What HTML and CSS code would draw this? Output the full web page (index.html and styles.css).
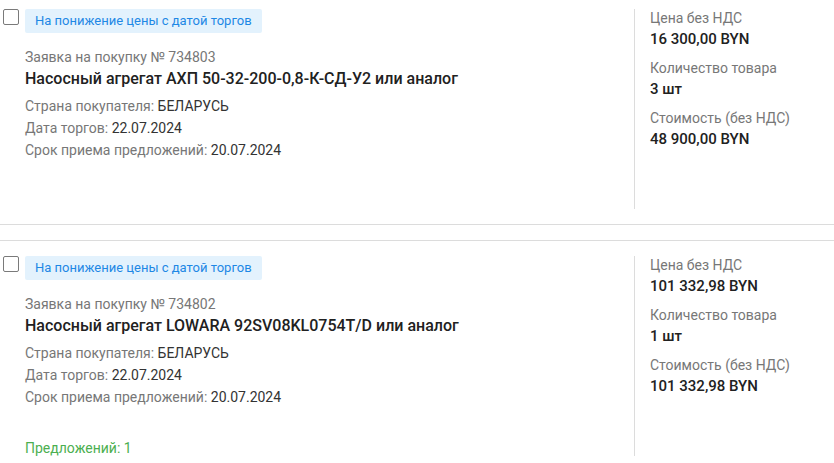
FILE: index.html
```html
<!DOCTYPE html>
<html lang="ru">
<head>
    <meta charset="UTF-8">
    <meta name="viewport" content="width=device-width, initial-scale=1.0">
    <title>Заявки на покупку</title>
    <link rel="stylesheet" href="styles.css">
</head>
<body>
    <div class="list">
        <div class="card">
            <div class="card-main">
                <span class="check"></span>
                <div class="card-body">
                    <span class="tag">На понижение цены с датой торгов</span>
                    <div class="number">Заявка на покупку № 734803</div>
                    <div class="title">Насосный агрегат АХП 50-32-200-0,8-К-СД-У2 или аналог</div>
                    <div class="info">
                        <div>Страна покупателя: <span class="val">БЕЛАРУСЬ</span></div>
                        <div>Дата торгов: <span class="val">22.07.2024</span></div>
                        <div>Срок приема предложений: <span class="val">20.07.2024</span></div>
                    </div>
                </div>
            </div>
            <div class="card-side">
                <div class="field">
                    <div class="label">Цена без НДС</div>
                    <div class="value">16 300,00 BYN</div>
                </div>
                <div class="field">
                    <div class="label">Количество товара</div>
                    <div class="value">3 шт</div>
                </div>
                <div class="field">
                    <div class="label">Стоимость (без НДС)</div>
                    <div class="value">48 900,00 BYN</div>
                </div>
            </div>
        </div>

        <div class="card">
            <div class="card-main">
                <span class="check"></span>
                <div class="card-body">
                    <span class="tag">На понижение цены с датой торгов</span>
                    <div class="number">Заявка на покупку № 734802</div>
                    <div class="title">Насосный агрегат LOWARA 92SV08KL0754T/D или аналог</div>
                    <div class="info">
                        <div>Страна покупателя: <span class="val">БЕЛАРУСЬ</span></div>
                        <div>Дата торгов: <span class="val">22.07.2024</span></div>
                        <div>Срок приема предложений: <span class="val">20.07.2024</span></div>
                    </div>
                    <div class="offers">Предложений: 1</div>
                </div>
            </div>
            <div class="card-side">
                <div class="field">
                    <div class="label">Цена без НДС</div>
                    <div class="value">101 332,98 BYN</div>
                </div>
                <div class="field">
                    <div class="label">Количество товара</div>
                    <div class="value">1 шт</div>
                </div>
                <div class="field">
                    <div class="label">Стоимость (без НДС)</div>
                    <div class="value">101 332,98 BYN</div>
                </div>
            </div>
        </div>
    </div>
</body>
</html>
```

FILE: styles.css
```css
body {
    font-family: Roboto, 'Liberation Sans', sans-serif;
    background-color: #fff;
    color: #212121;
    margin: 0;
    padding: 0;
    height: 463px;
    overflow: hidden;
}

.list {
    margin-top: -7px;
}

.card {
    display: flex;
    border-top: 1px solid #dcdcdc;
    border-bottom: 1px solid #dcdcdc;
    padding: 15px 0;
    margin-bottom: 15px;
}

.card-main {
    flex: 1;
    display: flex;
    padding-left: 3px;
}

.check {
    width: 16px;
    height: 16px;
    box-sizing: border-box;
    border: 1.5px solid #7a7a7a;
    border-radius: 2px;
    margin-right: 6px;
    flex-shrink: 0;
}

.card-body {
    flex: 1;
    display: flex;
    flex-direction: column;
    align-items: flex-start;
    height: 200px;
}

.tag {
    display: inline-block;
    background-color: #e3f2fd;
    color: #1e88e5;
    font-size: 13px;
    line-height: 24px;
    padding: 0 10px;
    border-radius: 2px;
}

.number {
    margin-top: 14px;
    font-size: 14px;
    line-height: 20px;
    color: #777;
}

.title {
    font-size: 16px;
    line-height: 24px;
    font-weight: 500;
    color: #212121;
}

.info {
    margin-top: 4px;
    font-size: 14px;
    line-height: 22px;
    color: #777;
}

.info .val {
    color: #333;
}

.offers {
    margin-top: auto;
    font-size: 14px;
    line-height: 16px;
    color: #4caf50;
}

.card-side {
    width: 184px;
    flex-shrink: 0;
    border-left: 1px solid #dcdcdc;
    padding-left: 15px;
    height: 200px;
}

.field {
    margin-bottom: 8px;
}

.label {
    font-size: 14px;
    line-height: 18px;
    color: #777;
}

.value {
    font-size: 15px;
    line-height: 24px;
    font-weight: 500;
    color: #212121;
}
```
